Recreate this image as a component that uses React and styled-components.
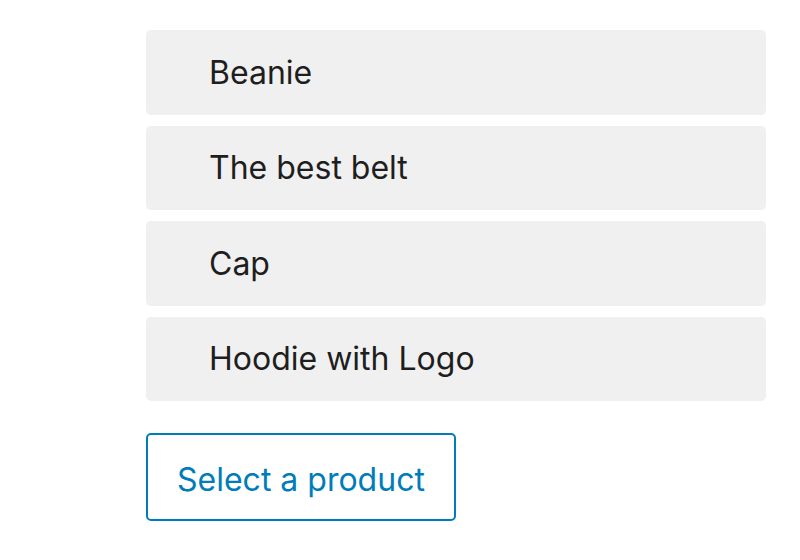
import React from 'react'
import styled, { createGlobalStyle } from 'styled-components'

const GlobalStyle = createGlobalStyle`
    body {
        margin: 0;
        background: #ffffff;
        font-family: Inter, "Liberation Sans", sans-serif;
    }
`

const products = ['Beanie', 'The best belt', 'Cap', 'Hoodie with Logo']

export default function App() {
    return (
        <>
            <GlobalStyle />
            <Page>
                <ProductList>
                    {products.map((name) => (
                        <ProductItem key={name}>{name}</ProductItem>
                    ))}
                </ProductList>
                <SelectButton type="button">Select a product</SelectButton>
            </Page>
        </>
    )
}

const Page = styled.div`
    display: flex;
    flex-direction: column;
    align-items: flex-start;
    gap: 31.5px;
    padding: 30px 0 0 146px;
    width: 620px;
`

const ProductList = styled.ul`
    display: flex;
    flex-direction: column;
    gap: 11px;
    list-style: none;
    margin: 0;
    padding: 0;
    width: 100%;
`

const ProductItem = styled.li`
    display: flex;
    align-items: center;
    height: 84.5px;
    padding-left: 63px;
    background: #f0f0f0;
    border-radius: 5px;
    color: #1e1e1e;
    font-size: 32px;
`

const SelectButton = styled.button`
    height: 88px;
    padding: 5px 29px 0;
    background: #ffffff;
    border: 2px solid #007cba;
    border-radius: 5px;
    color: #007cba;
    font-family: inherit;
    font-size: 32px;
    cursor: pointer;
`
